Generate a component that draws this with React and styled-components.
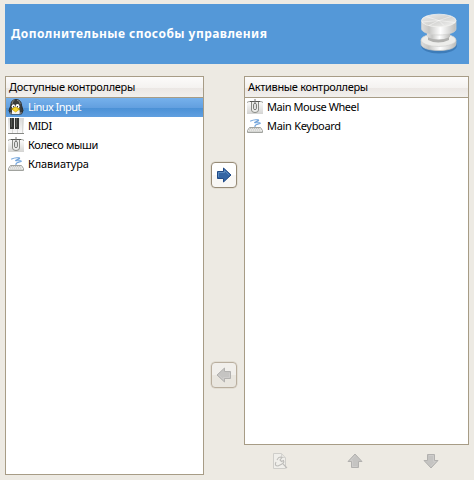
import React from "react";
import styled, { createGlobalStyle } from "styled-components";

const GlobalStyle = createGlobalStyle`
  * { box-sizing: border-box; }
  body { margin: 0; background: #edeae3; }
  svg { display: block; flex: none; }
`;

const Page = styled.div`
  width: 474px;
  height: 480px;
  padding: 4px 5px 5px;
  display: flex;
  flex-direction: column;
  gap: 12px;
  background: #edeae3;
  color: #000;
  font: 11px/19px "Noto Sans", sans-serif;
`;

const Banner = styled.header`
  flex: none;
  height: 60px;
  padding: 0 6px 2px;
  display: flex;
  align-items: center;
  justify-content: space-between;
  background: #5498d8;
`;

const Title = styled.h1`
  margin: 0;
  color: #fff;
  font-size: 12px;
  font-weight: 700;
  letter-spacing: 0.45px;
  white-space: nowrap;
`;

const Columns = styled.main`
  flex: none;
  height: 399px;
  display: grid;
  grid-template-columns: 199px 40px 225px;
`;

const Panel = styled.section`
  height: ${(p) => p.$height}px;
  border: 1px solid #a79c86;
  background: #fff;
`;

const PanelHeader = styled.div`
  height: 21px;
  padding-left: 3px;
  border-bottom: 1px solid #a79c86;
  background: linear-gradient(#fcfbfa 0, #f4f2f0 11px, #ebe7e4 11px, #f2f0ed 100%);
  white-space: nowrap;
  line-height: 20px;
`;

const Row = styled.div`
  height: 19px;
  padding: 0 0 1px 2px;
  display: flex;
  align-items: center;
  gap: 4px;
  line-height: 18px;
  color: ${(p) => (p.$selected ? "#fff" : "#000")};
  background: ${(p) =>
    p.$selected ? "linear-gradient(#76b1ec 0, #629fdf 10px, #4b91d6 10px, #609fe0 100%)" : "transparent"};
`;

const Label = styled.span`
  letter-spacing: ${(p) => p.$track || 0}px;
  white-space: nowrap;
`;

const Transfer = styled.div`
  display: flex;
  flex-direction: column;
  align-items: center;
  gap: 174px;
  padding-top: 86px;
`;

const TransferButton = styled.button`
  width: 26px;
  height: 26px;
  padding: 0;
  display: grid;
  place-items: center;
  border: 1px solid ${(p) => (p.disabled ? "#b9ae9e" : "#978b77")};
  border-radius: 4px;
  box-shadow: 0 0 0 0.5px #d8d1c5;
  background: ${(p) =>
    p.disabled ? "linear-gradient(#f1efeb 50%, #e9e6df 50%)" : "linear-gradient(#fff 50%, #f8f7f5 50%)"};
`;

const ActionBar = styled.div`
  margin-left: -2px;
  height: 32px;
  display: grid;
  grid-template-columns: 76px 74px 78px;
  place-items: center;
`;

const Arrow = ({ rotate = 0, active }) => (
  <svg width="16" height="16" viewBox="0 0 16 16">
    <g transform={`rotate(${rotate} 8 8)`}>
      <path d="M1.5 4.5h6V1L15 8l-7.5 7v-3.5h-6z" fill={active ? "#3465a4" : "#c5c4c2"} stroke={active ? "#204a87" : "#b2b1af"} />
      <path d="M2.5 10V5.5h6v-2L13.2 8" fill="none" stroke={active ? "#729fcf" : "#d2d1cf"} opacity=".65" />
    </g>
  </svg>
);

const Penguin = () => (
  <svg width="16" height="16" viewBox="0 0 16 16">
    <path d="M5.2 1.2Q8-.2 11 1.2q2.5 1.8 2.5 5L15 11.5l-1.5 3.5h-11L1 11.5l1.8-5q0-4 2.4-5.3z" fill="#3b3d3b" stroke="#2a2c2b" />
    <path d="M4 5q0-3.2 2.5-3.8M9 1.2q3 .3 3.3 4" fill="none" stroke="#858783" />
    <path d="M4 11h7.5l.5 4H4z" fill="#f4f4f2" />
    <ellipse cx="5.4" cy="7.3" rx="1.7" ry="2" fill="#fff" />
    <ellipse cx="9.5" cy="7.3" rx="2" ry="2.2" fill="#fff" />
    <path d="M5.2 7h1v1.5h-1zm3.7 0h1v1.5h-1z" fill="#222" />
    <path d="M3.7 10l3.6-1.9 4.4 1.8-4 3.1z" fill="#f8d52c" stroke="#d0a500" strokeWidth=".7" />
    <path d="M1.5 13l2 .3.7 1.7H2zm12.5 0l-2 .3-.7 1.7h2z" fill="#777" />
  </svg>
);

const Piano = () => (
  <svg width="16" height="16" viewBox="0 0 16 16">
    <defs><linearGradient id="pianoKeys" x2="0" y2="1"><stop stopColor="#d8d8d7" /><stop offset="1" stopColor="#fafafa" /></linearGradient></defs>
    <path d="M0 0h16v15H0z" fill="url(#pianoKeys)" />
    <path d="M4.5 10v5M9.5 10v5M14.5 0v15" stroke="#d8d8d6" />
    <path d="M2 0h4v11H2zm5 0h4v11H7z" fill="#343634" />
    <path d="M3 0h1v9H3zm5 0h1v9H8z" fill="#555854" />
    <path d="M0 15.5h16" stroke="#858784" />
  </svg>
);

const Mouse = () => (
  <svg width="16" height="16" viewBox="0 0 16 16">
    <defs><linearGradient id="mouseShell" x2="0" y2="1"><stop stopColor="#fff" /><stop offset="1" stopColor="#d4d4d2" /></linearGradient></defs>
    <path d="M0 2h16v13H0z" fill="url(#mouseShell)" />
    <path d="M0 3.5q1-1 3-1h10q2 0 3 1" fill="none" stroke="#9a9c97" />
    <path d="M3 2.5h10" stroke="#555753" />
    <path d="M4.5 3v8q0 2.5 3.5 2.5t3.5-2.5V3" fill="#ededeb" stroke="#888a85" />
    <path d="M8 0v4" stroke="#777" />
    <rect x="6.7" y="4.5" width="2.6" height="6" rx="1" fill="#fff" stroke="#50524e" strokeWidth=".9" />
  </svg>
);

const Keyboard = () => (
  <svg width="16" height="16" viewBox="0 0 16 16">
    <path d="M3.2 3.2Q7 1.2 11 1.9c2.8.8-4.5 2.2-3.2 2.8 1 .4 5.7-.5 5.5.6-.2.8-5.3.8-5.3 2.7v1.5" fill="none" stroke="#6fa2da" strokeWidth="1.1" />
    <path d="M2.5 9.5h11l2 3v2H.5v-2z" fill="#eeeeec" stroke="#a1a39f" />
    <path d="M3 10.5h10M2 12h12" stroke="#c0c1be" strokeDasharray="1.3 .7" />
    <path d="M1 13.5h14" stroke="#d5d6d3" />
  </svg>
);

const Knob = () => (
  <svg width="48" height="48" viewBox="0 0 48 48">
    <defs>
      <linearGradient id="knobSide"><stop stopColor="#ddd" /><stop offset=".22" stopColor="#c6c6c4" /><stop offset=".55" stopColor="#fff" /><stop offset="1" stopColor="#bcbcba" /></linearGradient>
      <linearGradient id="knobTop" x2="1" y2="1"><stop stopColor="#eee" /><stop offset=".5" stopColor="#d4d4d2" /><stop offset="1" stopColor="#f5f5f4" /></linearGradient>
    </defs>
    <ellipse cx="24" cy="36.5" rx="18" ry="8" fill="#316da9" opacity=".65" />
    <path d="M6 31v4c0 4 8 6.5 18 6.5S41 39 41 35v-4" fill="url(#knobSide)" stroke="#c5c5c3" strokeWidth=".7" />
    <ellipse cx="23.5" cy="31" rx="17.5" ry="6.5" fill="#ededeb" stroke="#d0d0ce" strokeWidth=".7" />
    <path d="M13 26v5q10 5 21 0v-5" fill="#b0b0ae" />
    <path d="M12 22v6q11 5 23 0v-6" fill="url(#knobSide)" />
    <path d="M6.5 12v8C7 23.5 15 26 24 26s17-2.5 17-6v-8" fill="url(#knobSide)" stroke="#d0d0ce" strokeWidth=".7" />
    <ellipse cx="23.8" cy="11.5" rx="17.3" ry="6.3" fill="url(#knobTop)" stroke="#f1f1ef" strokeWidth=".8" />
    <path d="M11 7.5l13 4 12-4m-12 4l16 2m-16-2l-10 5m10-5l5 5M24 11.5L7 13" fill="none" stroke="#fff" opacity=".45" />
  </svg>
);

const DocumentTool = () => (
  <svg width="16" height="16" viewBox="0 0 16 16">
    <path d="M1.5.5h8l4 4v11h-12z" fill="#f0efeb" stroke="#cfceca" />
    <path d="M9.5 1v3.5h4" fill="#e5e4e0" stroke="#d5d4d0" />
    <path d="M5 7q2-4 5-2.5L8 7l1.5 1.5 2-1q1 2-1 3L15 15M4 9q-2 4 2 4l4-2" fill="none" stroke="#bdbcb9" strokeWidth="1.1" />
  </svg>
);

const available = [
  { text: "Linux Input", Icon: Penguin, selected: true, track: -0.55 },
  { text: "MIDI", Icon: Piano, track: -0.45 },
  { text: "Колесо мыши", Icon: Mouse, track: -0.36 },
  { text: "Клавиатура", Icon: Keyboard, track: -0.12 },
];
const active = [
  { text: "Main Mouse Wheel", Icon: Mouse, track: -0.43 },
  { text: "Main Keyboard", Icon: Keyboard, track: -0.3 },
];

const ControllerList = ({ title, items, height }) => (
  <Panel $height={height}>
    <PanelHeader><Label $track={-0.32}>{title}</Label></PanelHeader>
    {items.map(({ text, Icon, selected, track }) => (
      <Row key={text} $selected={selected}><Icon /><Label $track={track}>{text}</Label></Row>
    ))}
  </Panel>
);

export default function App() {
  return (
    <Page>
      <GlobalStyle />
      <Banner><Title>Дополнительные способы управления</Title><Knob /></Banner>
      <Columns>
        <ControllerList title="Доступные контроллеры" items={available} height={399} />
        <Transfer>
          <TransferButton aria-label="Добавить"><Arrow active /></TransferButton>
          <TransferButton aria-label="Удалить" disabled><Arrow rotate={180} /></TransferButton>
        </Transfer>
        <div>
          <ControllerList title="Активные контроллеры" items={active} height={369} />
          <ActionBar><DocumentTool /><Arrow rotate={-90} /><Arrow rotate={90} /></ActionBar>
        </div>
      </Columns>
    </Page>
  );
}
